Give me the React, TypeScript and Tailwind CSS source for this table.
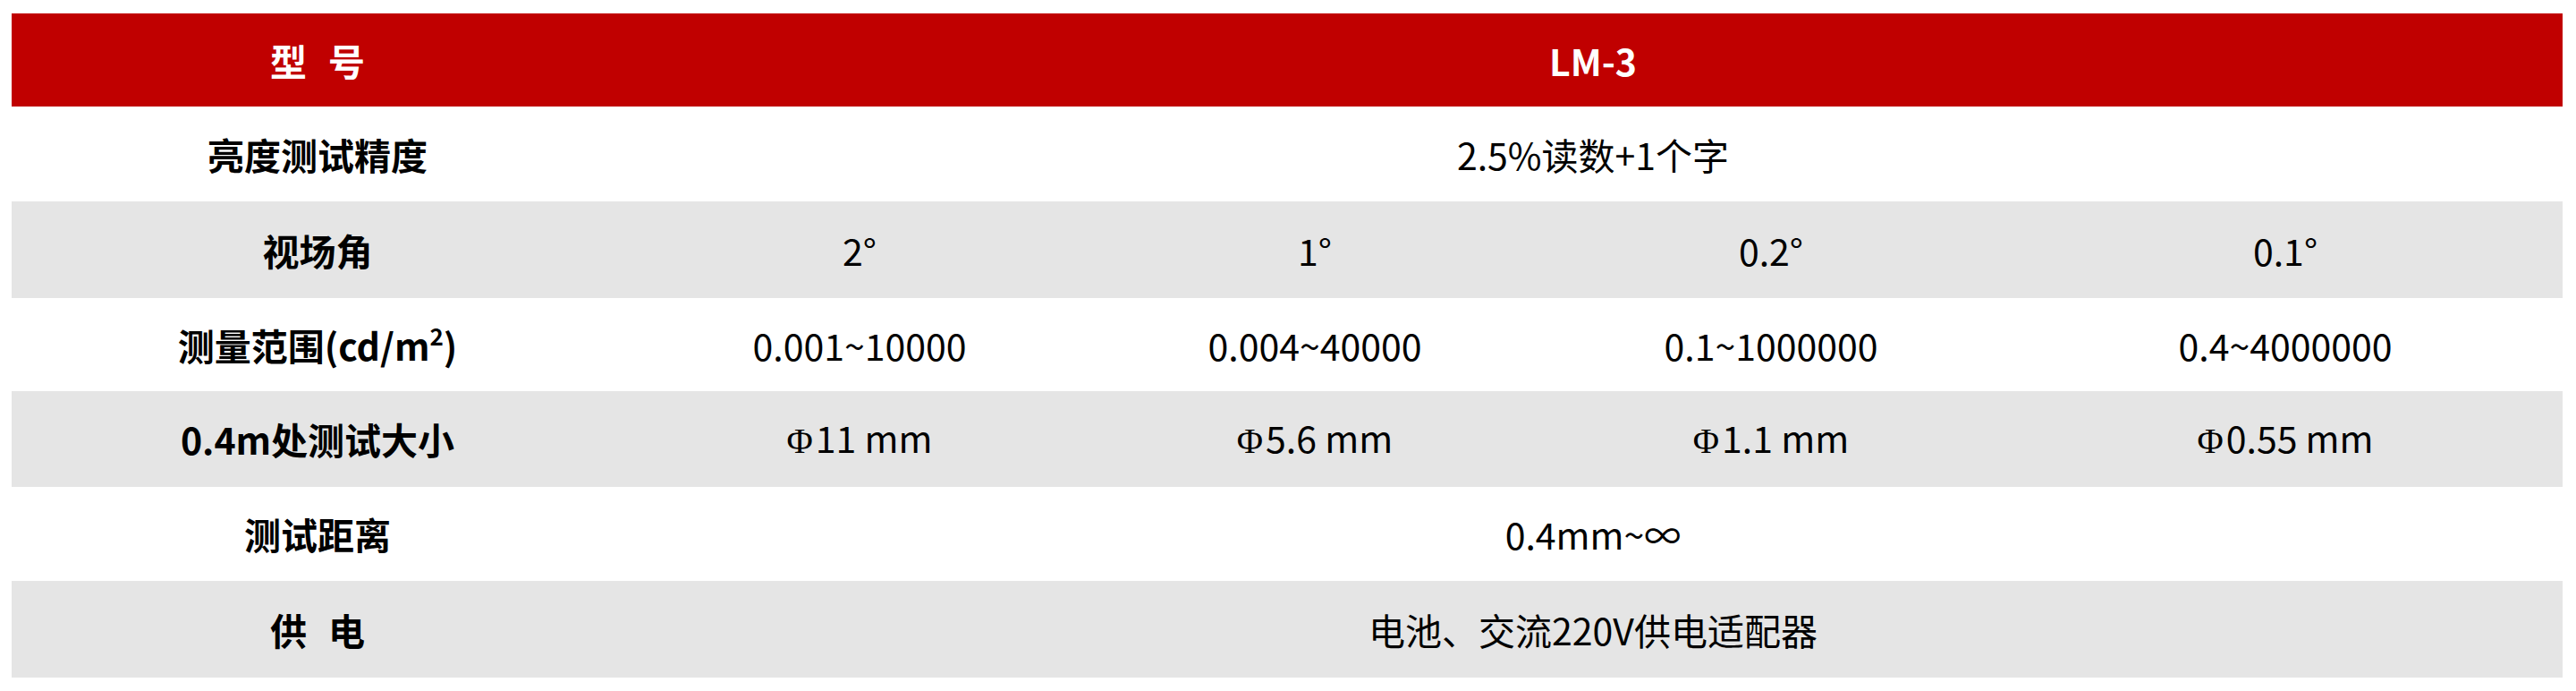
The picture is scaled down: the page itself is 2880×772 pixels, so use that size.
const rows: { label: React.ReactNode; cells: React.ReactNode[]; span?: boolean; gray: boolean; h: string }[] = [
  { label: "亮度测试精度", cells: ["2.5%读数+1个字"], span: true, gray: false, h: "h-[106px]" },
  { label: "视场角", cells: ["2°", "1°", "0.2°", "0.1°"], gray: true, h: "h-[108px]" },
  {
    label: (
      <>
        测量范围(cd/m<sup className="text-[26px] align-baseline relative -top-[17px]">2</sup>)
      </>
    ),
    cells: ["0.001~10000", "0.004~40000", "0.1~1000000", "0.4~4000000"],
    gray: false,
    h: "h-[104px]",
  },
  {
    label: "0.4m处测试大小",
    cells: ["11 mm", "5.6 mm", "1.1 mm", "0.55 mm"].map((v) => (
      <>
        <span className="font-['Liberation_Serif',serif] text-[40px] mr-[3px]">Φ</span>
        {v}
      </>
    )),
    gray: true,
    h: "h-[107px]",
  },
  { label: "测试距离", cells: ["0.4mm~∞"], span: true, gray: false, h: "h-[105px]" },
  {
    label: (
      <>
        供<span className="inline-block w-[24px]" />电
      </>
    ),
    cells: ["电池、交流220V供电适配器"],
    span: true,
    gray: true,
    h: "h-[108px]",
  },
]

export default function App() {
  return (
    <div className="w-[2880px] h-[772px] bg-white pt-[15px] pl-[13px] font-['Noto_Sans_CJK_SC','Noto_Sans',sans-serif] text-black">
      <table className="table-fixed border-collapse w-[2852px] text-[41px] leading-none">
        <colgroup>
          <col className="w-[684px]" />
          <col className="w-[528px]" />
          <col className="w-[490px]" />
          <col className="w-[530px]" />
          <col className="w-[620px]" />
        </colgroup>
        <thead>
          <tr className="h-[104px] bg-[#c00000] text-white font-bold">
            <th className="p-0 text-center">
              型<span className="inline-block w-[24px]" />号
            </th>
            <th colSpan={4} className="p-0 text-center">
              LM-3
            </th>
          </tr>
        </thead>
        <tbody>
          {rows.map((r, i) => (
            <tr key={i} className={`${r.h} ${r.gray ? "bg-[#e5e5e5]" : "bg-white"}`}>
              <td className="p-0 text-center font-bold">{r.label}</td>
              {r.span ? (
                <td colSpan={4} className="p-0 text-center">
                  {r.cells[0]}
                </td>
              ) : (
                r.cells.map((c, j) => (
                  <td key={j} className="p-0 text-center">
                    {c}
                  </td>
                ))
              )}
            </tr>
          ))}
        </tbody>
      </table>
    </div>
  )
}
